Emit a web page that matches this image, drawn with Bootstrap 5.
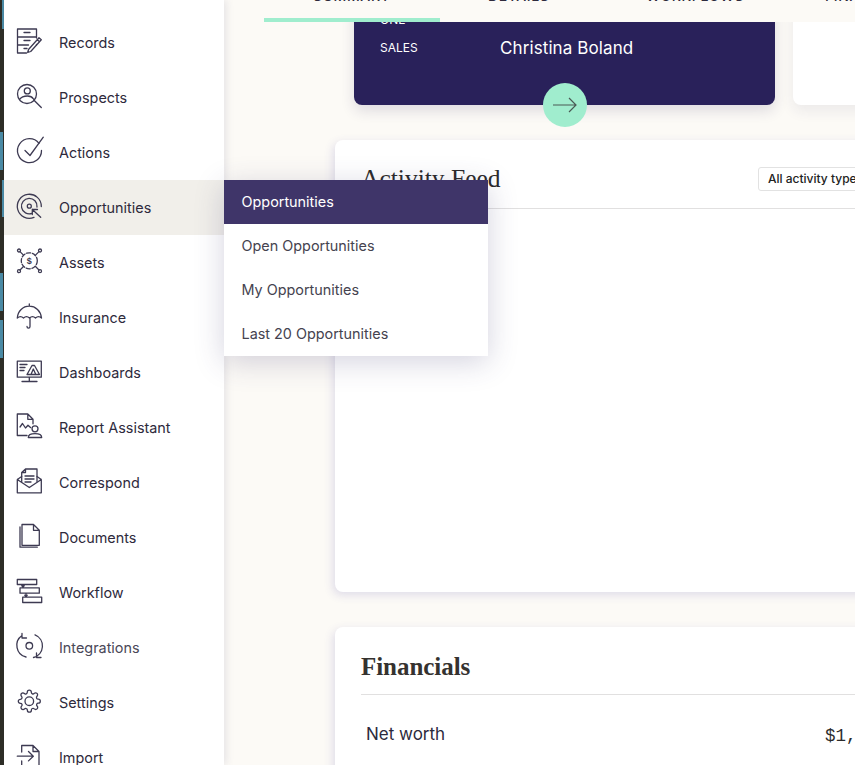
<!doctype html>
<html lang="en">
<head>
<meta charset="utf-8">
<title>Opportunities</title>
<link href="https://cdn.jsdelivr.net/npm/bootstrap@5.3.0/dist/css/bootstrap.min.css" rel="stylesheet">
<style>
html,body{height:765px;overflow:hidden}
body{background:#fcfaf6;font-family:Inter,"Liberation Sans",sans-serif;color:#2e2a3c}
.shell{height:765px;position:relative}
.rail{flex:0 0 4px;background:
 linear-gradient(#4b8ca6,#4b8ca6) 2px 0/2px 29px no-repeat,
 linear-gradient(#4b8ca6,#4b8ca6) 0 132px/3px 38px no-repeat,
 linear-gradient(#4b8ca6,#4b8ca6) 2px 180px/2px 37px no-repeat,
 linear-gradient(#4b8ca6,#4b8ca6) 0 273px/3px 38px no-repeat,
 linear-gradient(#4b8ca6,#4b8ca6) 0 320px/3px 38px no-repeat,
 #2e2e26}
.sidepanel{flex:0 0 220px;background:#fff;padding-top:15px;box-shadow:2px 0 8px rgba(60,55,110,.12);position:relative;z-index:2}
.sideitem{flex:0 0 55px;height:55px;padding-left:13px;gap:14px;font-size:14.4px;color:#2e2a3c;text-decoration:none}
.sideitem.current{background:#f1efea}
.sideitem.muted-item{color:#4a4858}
.sideicon{flex:0 0 28px;width:28px;height:28px;overflow:visible;fill:none;stroke:#3d3a52;stroke-width:1.3;stroke-linecap:round;stroke-linejoin:round}
.sideicon text{font:700 9px "Liberation Sans",sans-serif;fill:#3d3a52;stroke:none}
.content{flex:0 0 631px;overflow:hidden}
.tabstrip{height:22px;background:#fcfaf6;position:relative;z-index:1;margin-left:40px;margin-right:-40px;overflow:hidden}
.tabitem{height:22px;font-size:14px;font-weight:500;letter-spacing:.6px;line-height:1;margin-top:-11px;color:#2e2a3c;white-space:nowrap}
.tabone{flex:0 0 176px;padding-left:49px}
.tabtwo{flex:0 0 206px;padding-left:48px}
.tabthree{flex:0 0 179px;padding-left:0}
.tabbar-mark{position:absolute;left:0;top:18px;width:176px;height:4px;background:#a0edce}
.toprow{margin:-20px 0 0 130px;gap:18px;width:640px}
.darkcard{flex:0 0 421px;height:103px;background:#29215a;border:0;border-radius:8px;color:#fff;box-shadow:0 6px 14px rgba(40,35,90,.14);padding:0 26px}
.rowlabel{flex:0 0 120px;font-size:12px}
.onelabel{font-size:12px;height:17px;margin-top:9px;line-height:17px}
.rowvalue{font-size:17px;letter-spacing:.1px;padding-top:1px}
.datarow{height:28px;margin-top:6px}
.gobtn{position:absolute;left:189px;top:81px;width:44px;height:44px;border-radius:50%;background:#a0edce;border:0;padding:0}
.gobtn svg{fill:none;stroke:#4a5a55;stroke-width:1.2}
.whitecard{flex:1;height:103px;background:#fff;border:0;border-radius:8px;box-shadow:0 6px 14px rgba(40,35,90,.08)}
.panel{margin-left:111px;width:640px;background:#fff;border:0;border-radius:8px;box-shadow:-2px 3px 10px rgba(70,65,170,.16);padding:0 26px}
.feedpanel{margin-top:35px;height:452px}
.finpanel{margin-top:35px;height:300px}
.panelhead{border-bottom:1px solid #e1e0e0}
.feedhead{height:69px;padding-top:24px}
.finhead{height:68px;padding-top:25px}
.feedtitle{font:400 25.5px/1.2 "Liberation Serif",serif;color:#2c2a2a;margin:0}
.fintitle{font:700 25px/1.2 "Liberation Serif",serif;color:#35322f;margin:0;letter-spacing:-.05px}
.feedfilter{position:absolute;left:423px;top:27px;width:160px;height:24px;border:1px solid #e2e2e2;border-radius:3px;font-size:12px;font-weight:500;line-height:22px;padding-left:9px;color:#222;white-space:nowrap;background:#fff}
.networth{padding:27px 5px 0;font-size:17px;color:#2c2a3c}
.money{position:absolute;left:490px;top:99px;font:17.5px "Liberation Mono",monospace;color:#2c2c2c}
.flyout{position:absolute;left:224px;top:180px;width:264px;z-index:5;border-radius:0;box-shadow:0 6px 28px rgba(60,55,110,.22);--bs-list-group-border-width:0}
.flyout .list-group-item{height:44px;padding:1px 0 0 17.5px;line-height:42px;font-size:14.4px;color:#45434f;border:0}
.flyout .list-group-item.active{background:#3f3569;color:#fff}
</style>
</head>
<body>
<div class="shell d-flex">
  <div class="rail"></div>
  <nav class="sidepanel d-flex flex-column">
    <a class="sideitem d-flex align-items-center" href="#"><svg class="sideicon" viewBox="0 0 28 28"><path d="M19.500 9V0H.5v24h9M19.500 15.500V16M.5 8h19M.5 16h11"/><path d="M7 3.500h6M7 11.500h6M7 19.500h3"/><path d="M24.300 10.800l-2.300-2-10.500 11.700-.8 3 3-1zM20.300 10.700l2.300 2.100"/></svg><span>Records</span></a>
    <a class="sideitem d-flex align-items-center" href="#"><svg class="sideicon" viewBox="0 0 28 28"><circle cx="10" cy="10" r="9.500"/><circle cx="10.300" cy="6.900" r="3"/><path d="M2.500 15.500c2-3 4-3.500 8-3.500 2.500 0 4.500.7 6 3M16.800 16l7.500 7.500"/></svg><span>Prospects</span></a>
    <a class="sideitem d-flex align-items-center" href="#"><svg class="sideicon" viewBox="0 0 28 28"><path d="M22 4.300A12 12 0 1 0 24.500 11.500"/><path d="M8 11.500l5 5L26.300-1.800"/></svg><span>Actions</span></a>
    <a class="sideitem current d-flex align-items-center" href="#"><svg class="sideicon" viewBox="0 0 28 28"><path d="M17 23.300A12 12 0 1 1 24.300 12.500"/><path d="M15 19.400A7.800 7.800 0 1 1 20 13"/><circle cx="12.300" cy="12.200" r="2"/><path d="M23.700 23.200l-8.400-7.700M15.300 20.500v-5h5.200"/></svg><span>Opportunities</span></a>
    <a class="sideitem d-flex align-items-center" href="#"><svg class="sideicon" viewBox="0 0 28 28"><circle cx="12.300" cy="11.800" r="8" stroke-dasharray="4 1.800"/><text x="9.800" y="15">$</text><circle cx="2" cy="1.500" r="1.500"/><circle cx="23" cy="1.500" r="1.500"/><circle cx="2" cy="22.200" r="1.500"/><circle cx="23" cy="22.200" r="1.500"/><path d="M3 2.600l3.500 3.500M22 2.600l-3.500 3.500M3 21l3.500-3.500M22 21l-3.500-3.500"/></svg><span>Assets</span></a>
    <a class="sideitem d-flex align-items-center" href="#"><svg class="sideicon" viewBox="0 0 28 28"><path d="M12.300 0v2.200M.3 14C.8 7 6 2.200 12.300 2.200S23.800 7 24.500 14c-2-1.800-4-1.800-6 0-2-1.800-4-1.800-6 0-2-1.800-4-1.800-6 0-2-1.800-4-1.800-6.200 0zM13 14v8.500c0 2.200-3 2.200-3 0"/></svg><span>Insurance</span></a>
    <a class="sideitem d-flex align-items-center" href="#"><svg class="sideicon" viewBox="0 0 28 28"><path d="M.3 2.200h24v16H.3zM12.300 18.200v4M5 22.500h15"/><path d="M3 5.500h7M3 8.500h5M3 11.500h4M10 15.500L15 6.500h2.500l5 9zM14 15.500L16.300 10l2.500 5.500"/></svg><span>Dashboards</span></a>
    <a class="sideitem d-flex align-items-center" href="#"><svg class="sideicon" viewBox="0 0 28 28"><path d="M10 21.500H.3V0h10.500L16 5.300v4.500M10.800 0v5.300H16"/><path d="M3 13l2.500-3.500 3 4.500 2.500-2.800 2.500 2.300"/><circle cx="18" cy="14.800" r="3"/><path d="M11.300 23.500c0-3 2-3.800 6.700-3.800s6.700.8 6.700 3.800z"/></svg><span>Report Assistant</span></a>
    <a class="sideitem d-flex align-items-center" href="#"><svg class="sideicon" viewBox="0 0 28 28"><path d="M4.700 12.500V3.500L8.500 0H20v12.500M4.700 3.500h3.800V0"/><path d="M8 7h9M8 10h9M8 13h6"/><path d="M4.700 7.500L.3 10.500v13.300h24V10.500L20 7.500M.3 10.500l12 8 12-8"/></svg><span>Correspond</span></a>
    <a class="sideitem d-flex align-items-center" href="#"><svg class="sideicon" viewBox="0 0 28 28"><path d="M3 3v20.200h17.300M5 21.300V.5h11.500l5.800 5.800v15zM16.500.5v5.800h5.800"/></svg><span>Documents</span></a>
    <a class="sideitem d-flex align-items-center" href="#"><svg class="sideicon" viewBox="0 0 28 28"><path d="M.3.500h19.400v5H.3zM3 8.800h19.300v5.400H3zM5.700 18.200h19v5.300h-19zM6 5.500v3M6 8l-1.200-1.200M6 8l1.200-1.200M9 14.200v4M9 17.500l-1.200-1.200M9 17.500l1.200-1.200"/></svg><span>Workflow</span></a>
    <a class="sideitem muted-item d-flex align-items-center" href="#"><svg class="sideicon" viewBox="0 0 28 28"><circle cx="12.300" cy="11.800" r="3.300"/><path d="M5 1.500A12 12 0 0 0 9 23M18 .8A12 12 0 0 1 16.500 23.500M5 -.5v4.500h4.500M19.500 19v4.500H24"/></svg><span>Integrations</span></a>
    <a class="sideitem d-flex align-items-center" href="#"><svg class="sideicon" viewBox="0 0 28 28"><g transform="translate(.3 .2)"><circle cx="12" cy="12" r="4.300"/><path d="M19.400 15a1.650 1.650 0 0 0 .33 1.820l.06.06a2 2 0 0 1 0 2.830 2 2 0 0 1-2.830 0l-.06-.06a1.650 1.650 0 0 0-1.820-.33 1.650 1.650 0 0 0-1 1.510V21a2 2 0 0 1-2 2 2 2 0 0 1-2-2v-.09A1.650 1.650 0 0 0 9 19.400a1.650 1.650 0 0 0-1.820.33l-.06.06a2 2 0 0 1-2.830 0 2 2 0 0 1 0-2.830l.06-.06a1.650 1.650 0 0 0 .33-1.820 1.650 1.650 0 0 0-1.510-1H3a2 2 0 0 1-2-2 2 2 0 0 1 2-2h.09A1.650 1.650 0 0 0 4.600 9a1.650 1.650 0 0 0-.33-1.820l-.06-.06a2 2 0 0 1 0-2.830 2 2 0 0 1 2.830 0l.06.06a1.650 1.650 0 0 0 1.820.33H9a1.650 1.650 0 0 0 1-1.510V3a2 2 0 0 1 2-2 2 2 0 0 1 2 2v.09a1.650 1.650 0 0 0 1 1.510 1.650 1.650 0 0 0 1.820-.33l.06-.06a2 2 0 0 1 2.830 0 2 2 0 0 1 0 2.830l-.06.06a1.650 1.650 0 0 0-.33 1.820V9a1.650 1.650 0 0 0 1.510 1H21a2 2 0 0 1 2 2 2 2 0 0 1-2 2h-.09a1.650 1.650 0 0 0-1.510 1z"/></g></svg><span>Settings</span></a>
    <a class="sideitem d-flex align-items-center" href="#"><svg class="sideicon" viewBox="0 0 28 28"><path d="M4.700 8V1.500H16l6 6V28H4.700v-11M16 1.500v6h6M.3 12.200h16M11.500 7.500l4.800 4.700-4.800 4.700"/></svg><span>Import</span></a>
  </nav>
  <main class="content">
    <div class="tabstrip d-flex">
      <div class="tabitem tabone">SUMMARY</div>
      <div class="tabitem tabtwo">DETAILS</div>
      <div class="tabitem tabthree">WORKFLOWS</div>
      <div class="tabitem">FINANCIALS</div>
      <div class="tabbar-mark"></div>
    </div>
    <div class="toprow d-flex">
      <div class="card darkcard position-relative">
        <div class="onelabel">ONE</div>
        <div class="datarow d-flex align-items-center"><div class="rowlabel">SALES</div><div class="rowvalue">Christina Boland</div></div>
        <button class="gobtn d-flex align-items-center justify-content-center" type="button" aria-label="Open"><svg width="26" height="16" viewBox="0 0 26 16"><path d="M1 8h23M17 1l7 7-7 7"/></svg></button>
      </div>
      <div class="card whitecard"></div>
    </div>
    <section class="card panel feedpanel position-relative">
      <div class="panelhead feedhead"><h2 class="feedtitle">Activity Feed</h2></div>
      <div class="feedfilter">All activity types</div>
    </section>
    <section class="card panel finpanel position-relative">
      <div class="panelhead finhead"><h2 class="fintitle">Financials</h2></div>
      <div class="networth">Net worth</div>
      <div class="money">$1,</div>
    </section>
  </main>
  <div class="flyout list-group">
    <a class="list-group-item active" href="#">Opportunities</a>
    <a class="list-group-item" href="#">Open Opportunities</a>
    <a class="list-group-item" href="#">My Opportunities</a>
    <a class="list-group-item" href="#">Last 20 Opportunities</a>
  </div>
</div>
<script src="https://cdn.jsdelivr.net/npm/bootstrap@5.3.0/dist/js/bootstrap.bundle.min.js"></script>
</body>
</html>
